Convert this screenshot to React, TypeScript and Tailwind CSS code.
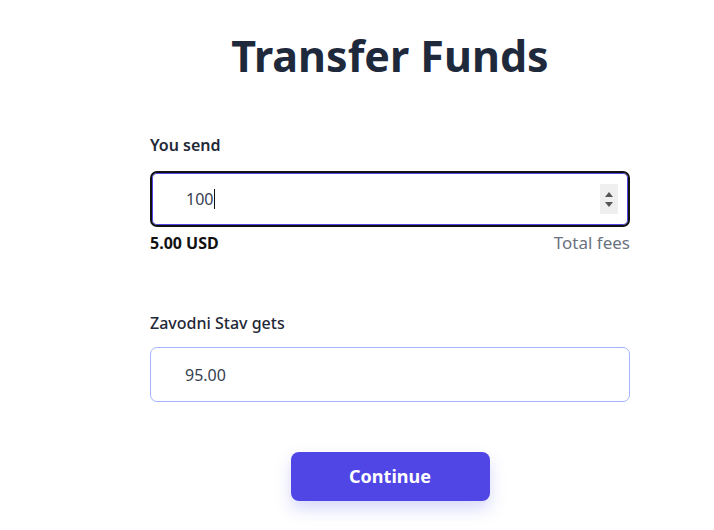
export default function App() {
  return (
    <div
      className="min-h-[530px] w-full bg-white text-[#1f2937]"
      style={{ fontFamily: '"Noto Sans", "Open Sans", sans-serif' }}
    >
      <div className="ml-[150px] flex w-[480px] flex-col pt-[26px]">
        <h1 className="text-center text-[43px] font-bold leading-[60px] text-[#1e293b]">
          Transfer Funds
        </h1>

        <label className="mt-[47px] text-[16px] font-semibold leading-[24px] text-[#1f2937]">
          You send
        </label>
        <div className="mt-[14px] flex h-[56px] items-center rounded-[7px] border-2 border-[#111111] pl-[34px] pr-[10px] shadow-[inset_0_0_0_1px_#4f46e5]">
          <div className="flex flex-1 items-center text-[16px] text-[#374151]">
            <span>100</span>
            <span className="ml-[1px] h-[20px] w-px bg-[#111]" />
          </div>
          <div className="flex h-[30px] w-[18px] flex-col items-center justify-center gap-[5px] bg-[#efefef]">
            <svg width="8" height="5" viewBox="0 0 8 5">
              <path d="M0 5 L4 0 L8 5 Z" fill="#555" />
            </svg>
            <svg width="8" height="5" viewBox="0 0 8 5">
              <path d="M0 0 L4 5 L8 0 Z" fill="#555" />
            </svg>
          </div>
        </div>
        <div className="mt-[4px] flex items-center justify-between leading-[24px]">
          <span className="text-[16px] font-bold text-[#111]">5.00 USD</span>
          <span className="text-[17px] text-[#6b7280]">Total fees</span>
        </div>

        <label className="mt-[56px] text-[16px] font-medium leading-[24px] text-[#1f2937]">
          Zavodni Stav gets
        </label>
        <div className="mt-[12px] flex h-[55px] items-center rounded-[7px] border border-[#a5b4fc] pl-[34px] text-[16px] text-[#374151]">
          95.00
        </div>

        <button className="mx-auto mt-[50px] h-[49px] w-[199px] rounded-[8px] bg-[#4f46e5] text-[18px] font-bold text-white shadow-[0_8px_16px_rgba(99,102,241,0.25)]">
          Continue
        </button>
      </div>
    </div>
  );
}
